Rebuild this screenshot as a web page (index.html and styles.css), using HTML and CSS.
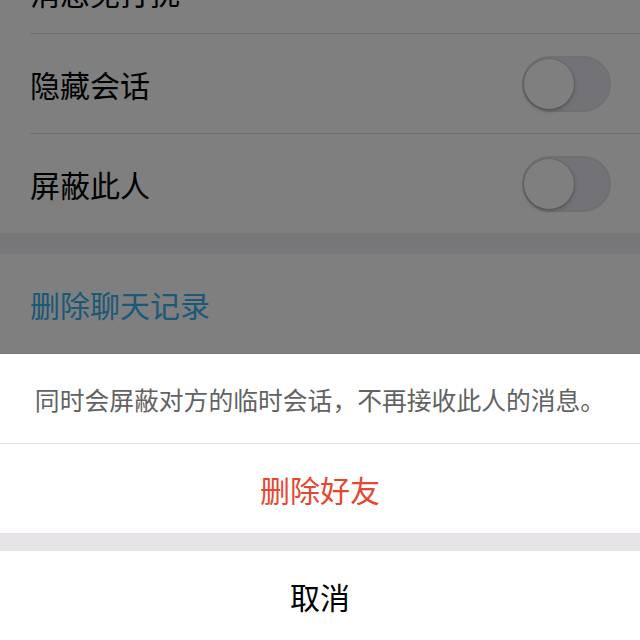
FILE: index.html
```html
<!DOCTYPE html>
<html lang="zh-CN">
    <head>
        <meta charset="UTF-8">
        <meta name="viewport" content="width=device-width, initial-scale=1.0">
        <title>聊天设置</title>
        <link rel="stylesheet" href="styles.css">
    </head>
<body>
    <div class="settings">
        <div class="group">
            <div class="row row-cut">
                <span class="label">消息免打扰</span>
            </div>
            <div class="row">
                <span class="label">隐藏会话</span>
                <div class="switch"><div class="knob"></div></div>
            </div>
            <div class="row">
                <span class="label">屏蔽此人</span>
                <div class="switch"><div class="knob"></div></div>
            </div>
        </div>

        <div class="group">
            <div class="row">
                <span class="label link">删除聊天记录</span>
            </div>
        </div>
    </div>

    <!-- dimmed backdrop and the action sheet on top of it -->
    <div class="mask"></div>

    <div class="sheet">
        <div class="sheet-tip">同时会屏蔽对方的临时会话，不再接收此人的消息。</div>
        <div class="sheet-item danger">删除好友</div>
        <div class="sheet-gap"></div>
        <div class="sheet-item">取消</div>
    </div>
</body>
</html>
```

FILE: styles.css
```css
html, body {
    margin: 0;
    padding: 0;
    height: 640px;
    overflow: hidden;
}

body {
    font-family: "Noto Sans CJK SC", "Noto Sans", sans-serif;
    background-color: #efeff4;
    color: #000;
}

.settings {
    margin-top: -23px;
}

.group {
    background: #fff;
    margin-bottom: 21px;
}

.row {
    height: 99px;
    margin-left: 30px;
    padding-right: 29px;
    display: flex;
    align-items: center;
    justify-content: space-between;
    border-bottom: 1px solid #dcdcdc;
}

.row:last-child {
    border-bottom: none;
}

.row-cut {
    height: 56px;
    align-items: flex-start;
}

.label {
    font-size: 30px;
    line-height: 30px;
}

.link {
    color: #38b0ee;
}

.switch {
    width: 89px;
    height: 56px;
    box-sizing: border-box;
    border-radius: 28px;
    background: #e6e6ee;
    border: 2px solid #e0e0e6;
    display: flex;
    align-items: center;
}

.knob {
    width: 50px;
    height: 50px;
    border-radius: 50%;
    background: #fff;
    box-shadow: 0 2px 4px rgba(0, 0, 0, 0.25), 0 0 0 1px rgba(0, 0, 0, 0.08);
}

.mask {
    position: fixed;
    inset: 0;
    background: rgba(0, 0, 0, 0.5);
}

.sheet {
    position: fixed;
    left: 0;
    right: 0;
    bottom: 0;
    background: #fff;
    display: flex;
    flex-direction: column;
}

.sheet-tip {
    height: 89px;
    display: flex;
    align-items: center;
    justify-content: center;
    font-size: 24.8px;
    color: #626262;
    border-bottom: 1px solid #e2e2e2;
}

.sheet-item {
    height: 89px;
    display: flex;
    align-items: center;
    justify-content: center;
    font-size: 30px;
    color: #000;
}

.danger {
    color: #e5472f;
}

.sheet-gap {
    height: 18px;
    background: #e6e4e6;
}
```
